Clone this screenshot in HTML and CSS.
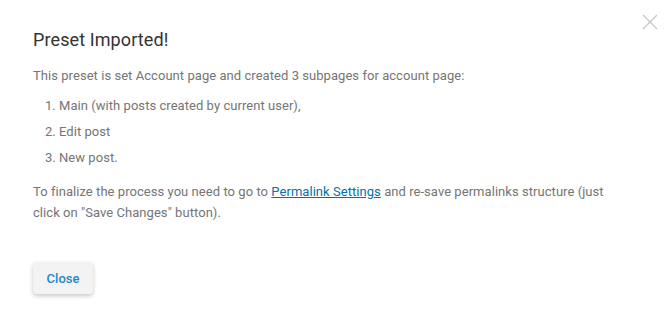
FILE: index.html
```html
<!DOCTYPE html>
<html>
<head>
<meta charset="utf-8">
<link rel="stylesheet" href="styles.css">
</head>
<body>
<div class="modal">
  <button class="close-x" aria-label="Close">
    <svg width="16" height="16" viewBox="0 0 16 16"><path d="M1 1 L15 15 M15 1 L1 15" stroke="#c8c8c8" stroke-width="1.4" fill="none"/></svg>
  </button>
  <h2 class="title">Preset Imported!</h2>
  <p class="text">This preset is set Account page and created 3 subpages for account page:</p>
  <ol class="list">
    <li>Main (with posts created by current user),</li>
    <li>Edit post</li>
    <li>New post.</li>
  </ol>
  <p class="text">To finalize the process you need to go to <a href="#" class="link">Permalink Settings</a> and re-save permalinks structure (just click on "Save Changes" button).</p>
  <div class="actions">
    <button class="btn">Close</button>
  </div>
</div>
</body>
</html>
```
FILE: styles.css
```css
html, body {
  margin: 0;
  padding: 0;
  background: #fff;
}
body {
  font-family: Roboto, "Liberation Sans", sans-serif;
  width: 669px;
  height: 321px;
  overflow: hidden;
}
.modal {
  position: relative;
  padding: 26px 33px 0 33px;
  box-sizing: border-box;
  width: 669px;
}
.close-x {
  position: absolute;
  top: 14px;
  right: 11px;
  background: none;
  border: 0;
  padding: 0;
  width: 16px;
  height: 16px;
}
.close-x svg { display: block; }
.title {
  margin: 0 0 11px 0;
  font-size: 18px;
  font-weight: 400;
  color: #333;
  line-height: 28px;
  letter-spacing: 0.1px;
}
.text {
  margin: 0;
  font-size: 13px;
  line-height: 21px;
  color: #757575;
  max-width: 580px;
  letter-spacing: 0.05px;
}
.list {
  margin: 9px 0 13px 0;
  padding-left: 26px;
  font-size: 13px;
  color: #757575;
  line-height: 21px;
  letter-spacing: 0.05px;
}
.list li { margin-bottom: 5px; }
.link {
  color: #0073aa;
  text-decoration: underline;
}
.actions {
  margin-top: 39px;
}
.btn {
  font-family: Roboto, "Liberation Sans", sans-serif;
  font-size: 13px;
  font-weight: 500;
  color: #1e88c8;
  background: #f3f3f3;
  border: 0;
  border-radius: 4px;
  width: 60px;
  height: 32px;
  padding: 0;
  box-shadow: 0 2px 4px rgba(0,0,0,0.22);
}
```
